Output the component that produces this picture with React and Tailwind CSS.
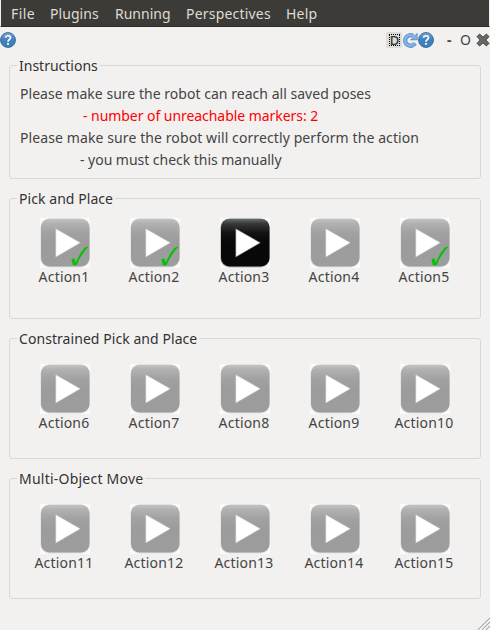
import React from 'react';

const MENU = [
  { label: 'File', box: 'w-[39px]', spacing: 'tracking-[0.4px]' },
  { label: 'Plugins', box: 'w-[65px]', spacing: 'tracking-[0.05px]' },
  { label: 'Running', box: 'w-[71px]', spacing: 'tracking-[0px]' },
  { label: 'Perspectives', box: 'w-[100px]', spacing: 'tracking-[0.2px]' },
  { label: 'Help', box: 'w-[40px]', spacing: 'tracking-[0.2px]' },
];

function HelpIcon() {
  return (
    <svg className="block h-4 w-4 shrink-0" viewBox="0 0 16 16">
      <defs>
        <linearGradient id="help" x1="0" y1="0" x2="0" y2="1">
          <stop offset="0" stopColor="#75a3d2" />
          <stop offset="0.5" stopColor="#437fbc" />
          <stop offset="1" stopColor="#3a82b9" />
        </linearGradient>
      </defs>
      <circle cx="8" cy="8" r="7.5" fill="url(#help)" stroke="#2c6095" strokeOpacity="0.8" />
      <path d="M5.6 5.6C5.7 3.2 10.5 3 10.5 5.7C10.5 7.5 8 7.7 8 9.7" fill="none" stroke="#fff" strokeWidth="1.7" />
      <rect x="7.1" y="11" width="1.8" height="1.8" fill="#fff" />
    </svg>
  );
}

function ReloadIcon() {
  return (
    <svg className="block h-4 w-4 shrink-0" viewBox="0 0 16 16">
      <path d="M13 11.2A5.3 5.3 0 1 1 11.3 4" fill="none" stroke="#5b93cf" strokeWidth="4.4" />
      <path d="M15.6 0.6V8.2H7.8Z" fill="#5b93cf" />
      <path d="M12.6 11.2A5.3 5.3 0 1 1 11.3 4" fill="none" stroke="#86b4e2" strokeWidth="2.6" />
      <path d="M14.7 2.6V7.3H9.9Z" fill="#86b4e2" />
    </svg>
  );
}

function CloseIcon() {
  return (
    <svg className="block h-[14px] w-[14px]" viewBox="0 0 14 14">
      <path d="M3.6 1L7 4.1L10.4 1L13 3.6L9.9 7L13 10.4L10.4 13L7 9.9L3.6 13L1 10.4L4.1 7L1 3.6Z" fill="#676763" stroke="#4d4d4a" strokeLinejoin="round" />
    </svg>
  );
}

function PlayIcon({ active }) {
  const id = active ? 'play-on' : 'play-off';
  return (
    <svg className="block h-[50px] w-[50px]" viewBox="0 0 50 50">
      <defs>
        <linearGradient id={id} x1="0" y1="0" x2="0" y2="1">
          <stop offset="0" stopColor={active ? '#6b6d6c' : '#c4c4c4'} />
          <stop offset="0.1" stopColor={active ? '#383a39' : '#b1b1b1'} />
          <stop offset="0.3" stopColor={active ? '#111311' : '#a1a1a1'} />
          <stop offset="0.5" stopColor={active ? '#080808' : '#9c9c9c'} />
          <stop offset="1" stopColor={active ? '#080808' : '#9d9d9d'} />
        </linearGradient>
      </defs>
      <rect width="50" height="50" fill="#fbfbfb" />
      <rect x="0.3" y="0.5" width="49.5" height="49" rx="9" fill={active ? '#b5b5b5' : '#dedede'} />
      <rect x="1" y="0.8" width="48.5" height="47.7" rx="8.5" fill={`url(#${id})`} />
      <path d="M15.8 10.8L40.3 24.8L15.8 39Z" fill="#fff" stroke={active ? '#777' : '#c6c6c6'} strokeWidth="0.5" />
    </svg>
  );
}

function CheckMark() {
  return (
    <svg className="absolute bottom-0 right-0 block h-[22px] w-[20px]" viewBox="0 0 20 22">
      <path d="M1.6 14.2C1.5 12.4 4.5 12 4.8 13.7L5.5 16.8C8.5 10.2 12 4.5 15.2 1.6C16 0.8 17.5 0.7 18.6 0.8C13.8 5.5 9.6 12 6.9 18.4C6.4 19.5 3 19.7 2.8 18.4Z" fill="#00c400" />
    </svg>
  );
}

function Group({ title, spacing, height, children }) {
  return (
    <section className={`${height} rounded-[3px] border border-[#d9d8d6]`}>
      <h2 className={`-mt-[10px] ml-[7px] h-[20px] w-fit whitespace-nowrap bg-[#f2f1f0] px-[2px] text-[14px] font-normal leading-[20px] text-[#333] ${spacing}`}>
        {title}
      </h2>
      {children}
    </section>
  );
}

function Actions({ first, pad, done = [], active }) {
  return (
    <div className={`mx-[10px] grid grid-cols-5 ${pad}`}>
      {[0, 1, 2, 3, 4].map((i) => {
        const n = first + i;
        return (
          <div key={n} className="flex flex-col items-center">
            <div className="relative">
              <PlayIcon active={n === active} />
              {done.includes(n) && <CheckMark />}
            </div>
            <span className="-mt-[1px] mr-[2px] whitespace-nowrap text-[14px] leading-[20px] tracking-[0.2px]">{`Action${n}`}</span>
          </div>
        );
      })}
    </div>
  );
}

export default function App() {
  return (
    <div className="flex h-[630px] w-[490px] flex-col overflow-hidden bg-[#f2f1f0] font-['Noto_Sans',sans-serif] text-[14px] text-[#444]">
      <nav className="flex h-[27px] shrink-0 border-x border-b border-x-[#f2f1f0] border-b-[#2d2c29] bg-[#3c3b37] pl-[10px] text-[#dfdbd2]">
        {MENU.map((m) => (
          <span key={m.label} className={`${m.box} ${m.spacing} whitespace-nowrap leading-[27px]`}>{m.label}</span>
        ))}
      </nav>

      <header className="flex h-[38px] shrink-0 items-start pt-[5px]">
        <HelpIcon />
        <div className="ml-[370px] flex h-4 w-4 items-center justify-center rounded-[2px] bg-[#dddcda]">
          <span className="ml-[1px] flex h-[12px] w-[11px] items-center justify-center border border-dotted border-black text-[13px] font-medium leading-none text-[#333]">D</span>
        </div>
        <div className="flex">
          <ReloadIcon />
          <HelpIcon />
        </div>
        <span className="ml-[13px] w-[13px] font-bold leading-[16px]">-</span>
        <span className="w-[16px] text-[14px] leading-[16px]">O</span>
        <div className="pt-[1px]"><CloseIcon /></div>
      </header>

      <main className="mx-[9px] flex flex-col gap-[19px]">
        <Group title="Instructions" height="h-[114px]" spacing="tracking-[0px]">
          <div className="flex flex-col whitespace-nowrap pl-[10px] pt-[7px] leading-[22px]">
            <p className="tracking-[0.03px]">Please make sure the robot can reach all saved poses</p>
            <p className="pl-[63px] tracking-[-0.05px] text-[#f00]">- number of unreachable markers: 2</p>
            <p className="tracking-[0.1px]">Please make sure the robot will correctly perform the action</p>
            <p className="pl-[60px] tracking-[-0.03px]">- you must check this manually</p>
          </div>
        </Group>
        <Group title="Pick and Place" height="h-[121px]" spacing="tracking-[0.06px]">
          <Actions first={1} pad="pt-[9px]" done={[1, 2, 5]} active={3} />
        </Group>
        <Group title="Constrained Pick and Place" height="h-[121px]" spacing="tracking-[0.06px]">
          <Actions first={6} pad="pt-[15px]" />
        </Group>
        <Group title="Multi-Object Move" height="h-[121px]" spacing="tracking-[0.23px]">
          <Actions first={11} pad="pt-[15px]" />
        </Group>
      </main>

      <svg className="ml-auto mt-auto block h-[13px] w-[13px] shrink-0" viewBox="0 0 13 13">
        <path d="M1 13L13 1M5 13L13 5M9 13L13 9" stroke="#a9a8a6" strokeWidth="1.1" />
        <path d="M2.5 13L13 2.5M6.5 13L13 6.5M10.5 13L13 10.5" stroke="#fff" strokeWidth="1" />
      </svg>
    </div>
  );
}
